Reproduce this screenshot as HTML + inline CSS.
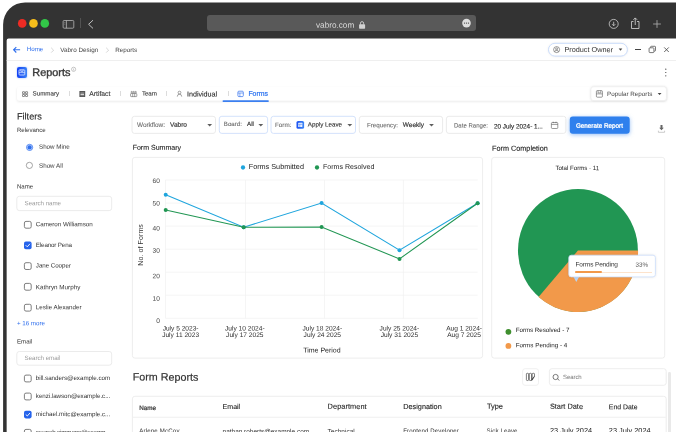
<!DOCTYPE html>
<html><head><meta charset="utf-8"><title>Reports</title>
<style>
*{box-sizing:border-box;margin:0;padding:0}
html,body{width:676px;height:432px;overflow:hidden;background:#fff}
body{position:relative;font-family:"Liberation Sans",sans-serif;}
.t{transform-origin:0 0;position:absolute;white-space:nowrap;line-height:1.117em;height:1.117em;display:block}
.a{position:absolute;display:block}
.box{position:absolute;border:1px solid #e6e6e6;border-radius:3px;background:#fff}
.cb{position:absolute;width:7.6px;height:7.6px;border:1px solid #555;border-radius:2px;background:#fff}
.cbc{position:absolute;width:7.6px;height:7.6px;border-radius:2px;background:#2563eb}
svg{position:absolute;overflow:visible}
#root{position:absolute;left:0;top:0;width:676px;height:432px;overflow:hidden;will-change:transform}
</style></head><body><div id="root">

<svg style="left:0;top:0" width="676" height="432"><path d="M3.1 440 V24.4 A22 22 0 0 1 25.1 2.4 H680 V440 Z" fill="#333"/><path d="M6.65 440 V40.5 A2 2 0 0 1 8.65 38.5 H680 V440 Z" fill="#fff"/><circle cx="22.2" cy="23.4" r="4.3" fill="#ee2b24"/><circle cx="33.5" cy="23.4" r="4.3" fill="#f6bd1b"/><circle cx="44.8" cy="23.4" r="4.3" fill="#32c748"/></svg>
<svg style="left:0;top:0" width="676" height="432"><g transform="translate(62,19)"><rect x="1.1" y="1.5" width="10.7" height="7.7" rx="1" fill="#3a3a3a" stroke="#bdbdbd" stroke-width="0.75"/><line x1="4.4" y1="1.5" x2="4.4" y2="9.2" stroke="#bdbdbd" stroke-width="0.75"/><path d="M2.1 3.6 H3.4 M2.1 5.2 H3.4" stroke="#999" stroke-width="0.5"/></g></svg>
<div class="a" style="left:80.2px;top:18.2px;width:0.6px;height:9.6px;background:#525252"></div>
<svg style="left:0;top:0" width="676" height="432"><g transform="translate(87.7,19.3)"><path d="M5.3 0.9 L0.9 5 L5.3 9.1" fill="none" stroke="#cfcfcf" stroke-width="0.9"/></g></svg>
<div class="a" style="left:207px;top:15px;width:269.4px;height:16px;border-radius:3px;background:#595959"></div>
<span class="t" style="left:316px;top:20px;font-size:8.2px;font-weight:400;color:#dcdcdc;letter-spacing:0.002px;transform:translate(0.00px,0.78px) rotate(0.05deg);">vabro.com</span>
<svg style="left:0;top:0" width="676" height="432"><g transform="translate(359,21)"><rect x="0.05" y="3.35" width="6.05" height="4.45" rx="0.7" fill="#d2d2d2"/><path d="M1.5 3.6 V2.2 a1.55 1.6 0 0 1 3.1 0 V3.6" fill="none" stroke="#d2d2d2" stroke-width="0.9"/></g></svg>
<svg style="left:0;top:0" width="676" height="432"><g transform="translate(462.2,18.8)"><circle cx="4.3" cy="4.3" r="4.3" fill="#dedede"/><circle cx="2.3" cy="4.3" r="0.65" fill="#444"/><circle cx="4.3" cy="4.3" r="0.65" fill="#444"/><circle cx="6.3" cy="4.3" r="0.65" fill="#444"/></g></svg>
<svg style="left:0;top:0" width="676" height="432"><g transform="translate(608.2,18.4)"><circle cx="5.5" cy="5.5" r="4.5" fill="none" stroke="#cfcfcf" stroke-width="0.8"/><path d="M5.5 3.3 V7.3 M3.9 5.8 L5.5 7.4 L7.1 5.8" fill="none" stroke="#cfcfcf" stroke-width="0.8"/></g></svg>
<svg style="left:0;top:0" width="676" height="432"><g transform="translate(630.3,17)"><path d="M3.2 4.5 H1.2 V11.5 H8.7 V4.5 H6.7" fill="none" stroke="#cfcfcf" stroke-width="0.85" stroke-linejoin="round"/><path d="M4.95 8 V1 M3.1 2.8 L4.95 0.9 L6.8 2.8" fill="none" stroke="#cfcfcf" stroke-width="0.85"/></g></svg>
<svg style="left:0;top:0" width="676" height="432"><g transform="translate(653,20)"><path d="M4 0.1 V7.9 M0.1 4 H7.9" stroke="#aaa" stroke-width="0.85"/></g></svg>
<svg style="left:0;top:0" width="676" height="432"><g transform="translate(12.9,46.6)"><path d="M7.2 3.2 H0.8 M3.4 0.5 L0.7 3.2 L3.4 5.9" fill="none" stroke="#2f6fed" stroke-width="1.1"/></g></svg>
<span class="t" style="left:26px;top:46px;font-size:6.24px;font-weight:400;color:#2f6fed;letter-spacing:-0.048px;transform:translate(0.80px,0.12px) rotate(0.05deg);">Home</span>
<svg style="left:0;top:0" width="676" height="432"><g transform="translate(50.5,47.2)"><path d="M0.7 0.6 L3.1 3 L0.7 5.4" fill="none" stroke="#c4c4c4" stroke-width="0.7"/></g></svg>
<span class="t" style="left:60px;top:46px;font-size:6.33px;font-weight:400;color:#444;letter-spacing:0.001px;transform:translate(0.30px,0.07px) rotate(0.05deg);">Vabro Design</span>
<svg style="left:0;top:0" width="676" height="432"><g transform="translate(105.5,47.2)"><path d="M0.7 0.6 L3.1 3 L0.7 5.4" fill="none" stroke="#c4c4c4" stroke-width="0.7"/></g></svg>
<span class="t" style="left:115px;top:46px;font-size:6.28px;font-weight:400;color:#444;letter-spacing:0.002px;transform:translate(0.20px,0.10px) rotate(0.05deg);">Reports</span>
<svg style="left:0;top:0" width="676" height="70"><rect x="6.6" y="60.0" width="680" height="0.8" fill="#ebebeb"/></svg>
<svg style="left:0;top:0" width="676" height="432"><rect x="548.5" y="43.3" width="78.90" height="12.80" rx="6.4" fill="#fff" stroke="#c4d8f9" stroke-width="0.9" style="filter:drop-shadow(0 0.6px 1px rgba(0,0,0,0.07))"/></svg>
<svg style="left:0;top:0" width="676" height="432"><g transform="translate(553.2,46.2)"><circle cx="3.4" cy="3.4" r="3" fill="none" stroke="#555" stroke-width="0.6"/><circle cx="3.4" cy="2.7" r="1" fill="none" stroke="#555" stroke-width="0.6"/><path d="M1.5 5.5 a2 2 0 0 1 3.8 0" fill="none" stroke="#555" stroke-width="0.6"/></g></svg>
<span class="t" style="left:564px;top:46px;font-size:7.29px;font-weight:400;color:#333;letter-spacing:-0.002px;transform:translate(0.40px,0.09px) rotate(0.05deg);">Product Owner</span>
<svg style="left:0;top:0" width="676" height="432"><g transform="translate(618.7,48.6)"><path d="M0 0 H3.6 L1.8 2.2 Z" fill="#444"/></g></svg>
<div class="a" style="left:635px;top:49.2px;width:6.2px;height:0.9px;background:#444"></div>
<svg style="left:0;top:0" width="676" height="432"><g transform="translate(648.6,45.8)"><rect x="0.5" y="2" width="4.8" height="4.8" rx="0.8" fill="#fff" stroke="#555" stroke-width="0.8"/><path d="M2 1.9 V1.2 a0.7 0.7 0 0 1 0.7 -0.7 H6.2 a0.7 0.7 0 0 1 0.7 0.7 V4.6 a0.7 0.7 0 0 1 -0.7 0.7 H5.4" fill="none" stroke="#555" stroke-width="0.8"/></g></svg>
<svg style="left:0;top:0" width="676" height="432"><g transform="translate(664,47.2)"><path d="M0.2 0.2 L4.8 4.8 M4.8 0.2 L0.2 4.8" stroke="#444" stroke-width="0.8"/></g></svg>
<div class="a" style="left:16.9px;top:67.1px;width:10.1px;height:10.6px;border-radius:2px;background:linear-gradient(90deg,#1240f5,#3b82f6);box-shadow:0 0 2px rgba(37,99,235,0.45)"></div>
<svg style="left:0;top:0" width="676" height="432"><g transform="translate(18.6,69.4)"><rect x="0.4" y="0.4" width="5.8" height="5.2" rx="0.8" fill="none" stroke="#dfe9ff" stroke-width="0.8"/><path d="M0.4 3.2 H6.2 M2.2 0.4 V2 H4.4 V0.4" fill="none" stroke="#dfe9ff" stroke-width="0.7"/></g></svg>
<span class="t" style="left:32px;top:65px;font-size:10.88px;font-weight:400;color:#3a3a3a;letter-spacing:0.001px;transform:translate(0.30px,0.95px) rotate(0.05deg);-webkit-text-stroke:0.4px #3a3a3a;">Reports</span>
<svg style="left:0;top:0" width="676" height="432"><g transform="translate(71.1,66.8)"><circle cx="2.5" cy="2.5" r="2.1" fill="none" stroke="#9a9a9a" stroke-width="0.55"/><path d="M2.5 2.3 V3.7 M2.5 1.3 V1.8" stroke="#9a9a9a" stroke-width="0.55"/></g></svg>
<svg style="left:0;top:0" width="676" height="100"><circle cx="665.8" cy="69.2" r="0.62" fill="#3a3a3a"/><circle cx="665.8" cy="72.5" r="0.62" fill="#3a3a3a"/><circle cx="665.8" cy="75.8" r="0.62" fill="#3a3a3a"/></svg>
<svg style="left:0;top:0" width="676" height="432"><rect x="17" y="87" width="649.60" height="13.80" rx="2" fill="#fff" stroke="none" stroke-width="0" style="filter:drop-shadow(0 1.1px 1.1px rgba(0,0,0,0.09))"/></svg>
<svg style="left:0;top:0" width="676" height="432"><g transform="translate(22.2,91.4)"><g fill="none" stroke="#444" stroke-width="0.6"><rect x="0.3" y="0.3" width="2.1" height="2" rx="0.3"/><rect x="3.3" y="0.3" width="2.1" height="2" rx="0.3"/><rect x="0.3" y="3.1" width="2.1" height="2" rx="0.3"/><rect x="3.3" y="3.1" width="2.1" height="2" rx="0.3"/></g></g></svg>
<span class="t" style="left:32px;top:90px;font-size:6.24px;font-weight:400;color:#3c3c3c;letter-spacing:-0.033px;transform:translate(0.60px,0.45px) rotate(0.05deg);-webkit-text-stroke:0.12px #3c3c3c;">Summary</span>
<div class="a" style="left:69.2px;top:91.4px;width:0.7px;height:4.6px;background:#dcdcdc"></div>
<div class="a" style="left:120.10000000000001px;top:91.4px;width:0.7px;height:4.6px;background:#dcdcdc"></div>
<div class="a" style="left:166.39999999999998px;top:91.4px;width:0.7px;height:4.6px;background:#dcdcdc"></div>
<div class="a" style="left:227.7px;top:91.4px;width:0.7px;height:4.6px;background:#dcdcdc"></div>
<svg style="left:0;top:0" width="676" height="432"><g transform="translate(79.4,91.2)"><rect x="0" y="-0.2" width="5.8" height="6.1" rx="0.4" fill="#555"/><rect x="1" y="0.7" width="3.8" height="4.3" fill="#7a7a7a"/><rect x="1.2" y="2.6" width="3.4" height="1.2" fill="#d4d4d4"/></g></svg>
<span class="t" style="left:89px;top:89px;font-size:6.81px;font-weight:400;color:#3c3c3c;letter-spacing:0.001px;transform:translate(0.20px,0.94px) rotate(0.05deg);-webkit-text-stroke:0.12px #3c3c3c;">Artifact</span>
<svg style="left:0;top:0" width="676" height="432"><g transform="translate(130.2,91)"><g fill="none" stroke="#555" stroke-width="0.55"><circle cx="1.5" cy="1.1" r="0.7"/><circle cx="3.5" cy="1.1" r="0.7"/><circle cx="5.5" cy="1.1" r="0.7"/><rect x="0.4" y="2.5" width="6.2" height="3.1" rx="0.5"/><path d="M2.5 2.5 V5.6 M4.5 2.5 V5.6"/></g></g></svg>
<span class="t" style="left:142px;top:90px;font-size:6.24px;font-weight:400;color:#3c3c3c;letter-spacing:-0.120px;transform:translate(0.00px,0.45px) rotate(0.05deg);-webkit-text-stroke:0.12px #3c3c3c;">Team</span>
<svg style="left:0;top:0" width="676" height="432"><g transform="translate(176.9,90.8)"><circle cx="2.6" cy="1.8" r="1.4" fill="none" stroke="#666" stroke-width="0.6"/><path d="M0.4 5.8 a2.2 2.4 0 0 1 4.4 0" fill="none" stroke="#666" stroke-width="0.6"/></g></svg>
<span class="t" style="left:187px;top:90px;font-size:7.2px;font-weight:400;color:#2a2a2a;letter-spacing:-0.025px;transform:translate(0.00px,0.48px) rotate(0.05deg);-webkit-text-stroke:0.1px #2a2a2a;">Individual</span>
<svg style="left:0;top:0" width="676" height="432"><g transform="translate(237.5,90.8)"><rect x="0.4" y="0.4" width="5.4" height="5.4" rx="1" fill="none" stroke="#2f6fed" stroke-width="0.7"/><path d="M0.4 2.2 H5.8 M2.4 2.2 V5.8" stroke="#2f6fed" stroke-width="0.6" fill="none"/></g></svg>
<span class="t" style="left:248px;top:89px;font-size:6.92px;font-weight:400;color:#3478f0;letter-spacing:-0.001px;transform:translate(0.40px,0.84px) rotate(0.05deg);-webkit-text-stroke:0.25px #3478f0;">Forms</span>
<svg style="left:0;top:0" width="676" height="120"><rect x="222.5" y="100.2" width="46.4" height="1.8" rx="0.9" fill="#3b7ff0"/></svg>
<svg style="left:0;top:0" width="676" height="432"><rect x="591" y="86.8" width="75.40" height="13.70" rx="2.5" fill="#fff" stroke="#ededed" stroke-width="0.6" style="filter:drop-shadow(0 0.5px 1.2px rgba(0,0,0,0.12))"/></svg>
<svg style="left:0;top:0" width="676" height="432"><g transform="translate(596,90.2)"><rect x="0.4" y="0.4" width="6" height="6.6" rx="0.9" fill="none" stroke="#555" stroke-width="0.6"/><path d="M2 0.4 V2.7 H4.8 V0.4 M0.4 3.7 H6.4" fill="none" stroke="#555" stroke-width="0.55"/></g></svg>
<span class="t" style="left:607px;top:90px;font-size:6.28px;font-weight:400;color:#444;letter-spacing:0.001px;transform:translate(0.00px,0.00px) rotate(0.05deg);">Popular Reports</span>
<svg style="left:0;top:0" width="676" height="432"><g transform="translate(657.7,93)"><path d="M0 0 H3.8 L1.9 2.1 Z" fill="#444"/></g></svg>
<span class="t" style="left:16px;top:111px;font-size:9.18px;font-weight:400;color:#2b2b2b;letter-spacing:0.002px;transform:translate(0.90px,0.59px) rotate(0.05deg);-webkit-text-stroke:0.14px #2b2b2b;">Filters</span>
<span class="t" style="left:16px;top:126px;font-size:6.1px;font-weight:400;color:#333;letter-spacing:-0.003px;transform:translate(0.90px,0.98px) rotate(0.05deg);">Relevance</span>
<svg style="left:0;top:0" width="676" height="432"><g transform="translate(25.6,143.4)"><circle cx="4" cy="4" r="3.1" fill="#dbe7ff" stroke="#2f6fed" stroke-width="0.75"/><circle cx="4" cy="4" r="2.15" fill="#2f6fed"/></g></svg>
<span class="t" style="left:39px;top:143px;font-size:6.24px;font-weight:400;color:#333;letter-spacing:-0.009px;transform:translate(0.00px,0.85px) rotate(0.05deg);">Show Mine</span>
<svg style="left:0;top:0" width="676" height="432"><g transform="translate(25.4,161.4)"><circle cx="4" cy="4" r="3.1" fill="#fff" stroke="#777" stroke-width="0.65"/></g></svg>
<span class="t" style="left:39px;top:161px;font-size:6.26px;font-weight:400;color:#333;letter-spacing:-0.001px;transform:translate(0.00px,0.83px) rotate(0.05deg);">Show All</span>
<span class="t" style="left:16px;top:183px;font-size:6.11px;font-weight:400;color:#333;letter-spacing:0.001px;transform:translate(0.90px,0.57px) rotate(0.05deg);">Name</span>
<svg style="left:0;top:0" width="676" height="432"><rect x="16.8" y="196.3" width="94.90" height="14.30" rx="2.5" fill="#fff" stroke="#e6e6e6" stroke-width="0.8" /></svg>
<span class="t" style="left:24px;top:200px;font-size:6.24px;font-weight:400;color:#9a9a9a;letter-spacing:-0.061px;transform:translate(0.60px,0.15px) rotate(0.05deg);">Search name</span>
<svg style="left:0;top:0" width="676" height="432"><g transform="translate(24.0,221.0)"><rect x="0.4" y="0.4" width="6.8" height="6.8" rx="1.6" fill="#fff" stroke="#606060" stroke-width="0.8"/></g></svg>
<span class="t" style="left:35px;top:221px;font-size:6.24px;font-weight:400;color:#333;letter-spacing:-0.036px;transform:translate(0.85px,0.30px) rotate(0.05deg);">Cameron Williamson</span>
<svg style="left:0;top:0" width="676" height="432"><g transform="translate(24.0,241.6)"><rect width="7.6" height="7.6" rx="1.8" fill="#2563eb"/><path d="M2 3.9 L3.3 5.2 L5.7 2.5" fill="none" stroke="#fff" stroke-width="0.9" stroke-linecap="round" stroke-linejoin="round"/></g></svg>
<span class="t" style="left:35px;top:241px;font-size:6.24px;font-weight:400;color:#333;letter-spacing:-0.151px;transform:translate(0.85px,0.90px) rotate(0.05deg);">Eleanor Pena</span>
<svg style="left:0;top:0" width="676" height="432"><g transform="translate(24.0,262.3)"><rect x="0.4" y="0.4" width="6.8" height="6.8" rx="1.6" fill="#fff" stroke="#606060" stroke-width="0.8"/></g></svg>
<span class="t" style="left:35px;top:262px;font-size:6.24px;font-weight:400;color:#333;letter-spacing:-0.068px;transform:translate(0.85px,0.60px) rotate(0.05deg);">Jane Cooper</span>
<svg style="left:0;top:0" width="676" height="432"><g transform="translate(24.0,283.0)"><rect x="0.4" y="0.4" width="6.8" height="6.8" rx="1.6" fill="#fff" stroke="#606060" stroke-width="0.8"/></g></svg>
<span class="t" style="left:35px;top:283px;font-size:6.3px;font-weight:400;color:#333;letter-spacing:-0.001px;transform:translate(0.85px,0.25px) rotate(0.05deg);">Kathryn Murphy</span>
<svg style="left:0;top:0" width="676" height="432"><g transform="translate(24.0,303.9)"><rect x="0.4" y="0.4" width="6.8" height="6.8" rx="1.6" fill="#fff" stroke="#606060" stroke-width="0.8"/></g></svg>
<span class="t" style="left:35px;top:304px;font-size:6.24px;font-weight:400;color:#333;letter-spacing:-0.003px;transform:translate(0.85px,0.20px) rotate(0.05deg);">Leslie Alexander</span>
<span class="t" style="left:16px;top:320px;font-size:6.24px;font-weight:400;color:#2f6fed;letter-spacing:-0.021px;transform:translate(0.90px,0.25px) rotate(0.05deg);">+ 16 more</span>
<span class="t" style="left:16px;top:338px;font-size:6.16px;font-weight:400;color:#333;letter-spacing:-0.001px;transform:translate(0.90px,0.43px) rotate(0.05deg);">Email</span>
<svg style="left:0;top:0" width="676" height="432"><rect x="16.8" y="351.5" width="94.90" height="13.70" rx="2.5" fill="#fff" stroke="#e6e6e6" stroke-width="0.8" /></svg>
<span class="t" style="left:24px;top:354px;font-size:6.24px;font-weight:400;color:#9a9a9a;letter-spacing:-0.065px;transform:translate(0.60px,0.95px) rotate(0.05deg);">Search email</span>
<svg style="left:0;top:0" width="676" height="432"><g transform="translate(24.0,374.7)"><rect x="0.4" y="0.4" width="6.8" height="6.8" rx="1.6" fill="#fff" stroke="#606060" stroke-width="0.8"/></g></svg>
<span class="t" style="left:35px;top:375px;font-size:6.24px;font-weight:400;color:#333;letter-spacing:-0.024px;transform:translate(0.85px,0.00px) rotate(0.05deg);">bill.sanders@example.com</span>
<svg style="left:0;top:0" width="676" height="432"><g transform="translate(24.0,392.7)"><rect x="0.4" y="0.4" width="6.8" height="6.8" rx="1.6" fill="#fff" stroke="#606060" stroke-width="0.8"/></g></svg>
<span class="t" style="left:35px;top:393px;font-size:6.24px;font-weight:400;color:#333;letter-spacing:-0.052px;transform:translate(0.85px,0.00px) rotate(0.05deg);">kenzi.lawson@example.c...</span>
<svg style="left:0;top:0" width="676" height="432"><g transform="translate(24.0,410.8)"><rect width="7.6" height="7.6" rx="1.8" fill="#2563eb"/><path d="M2 3.9 L3.3 5.2 L5.7 2.5" fill="none" stroke="#fff" stroke-width="0.9" stroke-linecap="round" stroke-linejoin="round"/></g></svg>
<span class="t" style="left:35px;top:411px;font-size:6.24px;font-weight:400;color:#333;letter-spacing:-0.008px;transform:translate(0.85px,0.10px) rotate(0.05deg);">michael.mitc@example.c...</span>
<svg style="left:0;top:0" width="676" height="432"><g transform="translate(24.0,429.0)"><rect x="0.4" y="0.4" width="6.8" height="6.8" rx="1.6" fill="#fff" stroke="#606060" stroke-width="0.8"/></g></svg>
<span class="t" style="left:35px;top:429px;font-size:6.24px;font-weight:400;color:#333;letter-spacing:-0.136px;transform:translate(0.85px,0.30px) rotate(0.05deg);">seunah.simmons@examp...</span>
<svg style="left:0;top:0" width="676" height="432"><rect x="132" y="116.3" width="83.50" height="17.10" rx="2.5" fill="#fff" stroke="#e8e8e8" stroke-width="0.9" /></svg>
<span class="t" style="left:137px;top:120px;font-size:6.41px;font-weight:400;color:#6a6a6a;letter-spacing:-0.002px;transform:translate(0.00px,0.92px) rotate(0.05deg);-webkit-text-stroke:0.08px #6a6a6a;">Workflow:</span>
<span class="t" style="left:170px;top:120px;font-size:6.55px;font-weight:400;color:#333;letter-spacing:0.002px;transform:translate(0.00px,0.84px) rotate(0.05deg);-webkit-text-stroke:0.18px #333;">Vabro</span>
<svg style="left:0;top:0" width="676" height="432"><g transform="translate(207.3,123.9)"><path d="M0 0 H4.8 L2.4 2.6 Z" fill="#5e5e5e"/></g></svg>
<svg style="left:0;top:0" width="676" height="432"><rect x="219.3" y="116.3" width="48.30" height="17.10" rx="2.5" fill="#fff" stroke="#cfdffb" stroke-width="0.9" /></svg>
<span class="t" style="left:223px;top:121px;font-size:6.14px;font-weight:400;color:#6a6a6a;letter-spacing:0.002px;transform:translate(0.80px,0.09px) rotate(0.05deg);-webkit-text-stroke:0.08px #6a6a6a;">Board:</span>
<span class="t" style="left:247px;top:121px;font-size:6.21px;font-weight:400;color:#333;letter-spacing:-0.001px;transform:translate(0.10px,0.04px) rotate(0.05deg);-webkit-text-stroke:0.18px #333;">All</span>
<svg style="left:0;top:0" width="676" height="432"><g transform="translate(258.4,123.9)"><path d="M0 0 H4.8 L2.4 2.6 Z" fill="#5e5e5e"/></g></svg>
<svg style="left:0;top:0" width="676" height="432"><rect x="271" y="116.3" width="84.50" height="17.10" rx="2.5" fill="#fff" stroke="#cfdffb" stroke-width="0.9" /></svg>
<span class="t" style="left:275px;top:121px;font-size:6.28px;font-weight:400;color:#6a6a6a;letter-spacing:0.001px;transform:translate(0.00px,0.00px) rotate(0.05deg);-webkit-text-stroke:0.08px #6a6a6a;">Form:</span>
<svg style="left:0;top:0" width="676" height="432"><g transform="translate(296.5,121)"><defs><linearGradient id="fg"><stop offset="0" stop-color="#1a4ff2"/><stop offset="1" stop-color="#3b86f6"/></linearGradient></defs><rect width="7.6" height="7.8" rx="1.6" fill="url(#fg)"/><rect x="1.7" y="1.7" width="4.2" height="4.2" rx="0.5" fill="#e9f0ff"/><path d="M1.7 3.3 H5.9 M3.3 3.3 V5.9" stroke="#2f6fed" stroke-width="0.5"/></g></svg>
<span class="t" style="left:307px;top:121px;font-size:6.21px;font-weight:400;color:#333;letter-spacing:0.002px;transform:translate(0.80px,0.54px) rotate(0.05deg);-webkit-text-stroke:0.12px #333;">Apply Leave</span>
<svg style="left:0;top:0" width="676" height="432"><g transform="translate(347.4,123.9)"><path d="M0 0 H4.8 L2.4 2.6 Z" fill="#5e5e5e"/></g></svg>
<svg style="left:0;top:0" width="676" height="432"><rect x="359.3" y="116.3" width="83.30" height="17.10" rx="2.5" fill="#fff" stroke="#e8e8e8" stroke-width="0.9" /></svg>
<span class="t" style="left:366px;top:122px;font-size:6.22px;font-weight:400;color:#6a6a6a;letter-spacing:-0.002px;transform:translate(0.90px,0.24px) rotate(0.05deg);-webkit-text-stroke:0.08px #6a6a6a;">Frequency:</span>
<span class="t" style="left:402px;top:120px;font-size:6.5px;font-weight:400;color:#333;letter-spacing:0.002px;transform:translate(0.80px,0.87px) rotate(0.05deg);-webkit-text-stroke:0.18px #333;">Weekly</span>
<svg style="left:0;top:0" width="676" height="432"><g transform="translate(429.1,123.9)"><path d="M0 0 H4.8 L2.4 2.6 Z" fill="#5e5e5e"/></g></svg>
<svg style="left:0;top:0" width="676" height="432"><rect x="446.4" y="116.3" width="119.50" height="17.10" rx="2.5" fill="#fff" stroke="#e8e8e8" stroke-width="0.9" /></svg>
<span class="t" style="left:454px;top:122px;font-size:6.06px;font-weight:400;color:#6a6a6a;letter-spacing:-0.003px;transform:translate(0.00px,0.43px) rotate(0.05deg);-webkit-text-stroke:0.08px #6a6a6a;">Date Range:</span>
<span class="t" style="left:494px;top:122px;font-size:6.39px;font-weight:400;color:#222;letter-spacing:-0.001px;transform:translate(0.00px,0.43px) rotate(0.05deg);-webkit-text-stroke:0.12px #222;">20 July 2024- 1...</span>
<svg style="left:0;top:0" width="676" height="432"><g transform="translate(551,121.5)"><rect x="0.4" y="1" width="6.4" height="6" rx="0.9" fill="none" stroke="#555" stroke-width="0.6"/><path d="M0.4 2.9 H6.8 M2.2 0.2 V1.6 M5 0.2 V1.6" stroke="#555" stroke-width="0.6" fill="none"/></g></svg>
<svg style="left:0;top:0" width="676" height="432"><rect x="569.8" y="116.4" width="59.90" height="17.30" rx="3" fill="#2f80ed" stroke="none" stroke-width="0" style="filter:drop-shadow(0 1px 2px rgba(47,128,237,0.5))"/></svg>
<span class="t" style="left:575px;top:121px;font-size:6.32px;font-weight:400;color:#fff;letter-spacing:0.002px;transform:translate(0.90px,0.68px) rotate(0.05deg);-webkit-text-stroke:0.3px #fff;">Generate Report</span>
<svg style="left:0;top:0" width="676" height="432"><g transform="translate(658,124.6)"><path d="M2.5 0.5 H4.5 V3.1 H5.8 L3.5 5.6 L1.2 3.1 H2.5 Z" fill="#666"/><path d="M0.4 6.1 V7.7 H6.6 V6.1" fill="none" stroke="#aaa" stroke-width="0.6"/></g></svg>
<span class="t" style="left:132px;top:143px;font-size:7.03px;font-weight:400;color:#222;letter-spacing:0.002px;transform:translate(0.65px,0.84px) rotate(0.05deg);-webkit-text-stroke:0.12px #222;">Form Summary</span>
<span class="t" style="left:492px;top:144px;font-size:7.26px;font-weight:400;color:#222;letter-spacing:0.002px;transform:translate(0.10px,0.73px) rotate(0.05deg);-webkit-text-stroke:0.12px #222;">Form Completion</span>
<svg style="left:0;top:0" width="676" height="432"><rect x="132.4" y="157.4" width="350.20" height="200.70" rx="2.5" fill="#fff" stroke="#e9e9e9" stroke-width="0.8" /></svg>
<svg style="left:0;top:0" width="676" height="432" viewBox="0 0 676 432"><line x1="165.4" y1="318.3" x2="477.7" y2="318.3" stroke="#f1f1f1" stroke-width="0.7"/><line x1="165.4" y1="295.2" x2="477.7" y2="295.2" stroke="#f1f1f1" stroke-width="0.7"/><line x1="165.4" y1="272.2" x2="477.7" y2="272.2" stroke="#f1f1f1" stroke-width="0.7"/><line x1="165.4" y1="249.2" x2="477.7" y2="249.2" stroke="#f1f1f1" stroke-width="0.7"/><line x1="165.4" y1="226.1" x2="477.7" y2="226.1" stroke="#f1f1f1" stroke-width="0.7"/><line x1="165.4" y1="203.1" x2="477.7" y2="203.1" stroke="#f1f1f1" stroke-width="0.7"/><line x1="165.4" y1="180.0" x2="477.7" y2="180.0" stroke="#f1f1f1" stroke-width="0.7"/><line x1="165.5" y1="180.0" x2="165.5" y2="318.3" stroke="#f1f1f1" stroke-width="0.7"/><line x1="245.5" y1="180.0" x2="245.5" y2="318.3" stroke="#f1f1f1" stroke-width="0.7"/><line x1="324.5" y1="180.0" x2="324.5" y2="318.3" stroke="#f1f1f1" stroke-width="0.7"/><line x1="403.4" y1="180.0" x2="403.4" y2="318.3" stroke="#f1f1f1" stroke-width="0.7"/><polyline points="165.7,194.80 243.7,227.20 321.6,203.00 399.5,250.20 477.6,203.20" fill="none" stroke="#1fa5dd" stroke-width="1.05"/><circle cx="165.7" cy="194.80" r="2" fill="#1fa5dd"/><circle cx="243.7" cy="227.20" r="2" fill="#1fa5dd"/><circle cx="321.6" cy="203.00" r="2" fill="#1fa5dd"/><circle cx="399.5" cy="250.20" r="2" fill="#1fa5dd"/><circle cx="477.6" cy="203.20" r="2" fill="#1fa5dd"/><polyline points="165.7,209.90 243.7,227.20 321.6,227.05 399.5,258.90 477.6,203.20" fill="none" stroke="#219653" stroke-width="1.05"/><circle cx="165.7" cy="209.90" r="2" fill="#219653"/><circle cx="243.7" cy="227.20" r="2" fill="#219653"/><circle cx="321.6" cy="227.05" r="2" fill="#219653"/><circle cx="399.5" cy="258.90" r="2" fill="#219653"/><circle cx="477.6" cy="203.20" r="2" fill="#219653"/><circle cx="243" cy="167.5" r="2.15" fill="#1fa5dd"/><circle cx="317" cy="167.5" r="2.15" fill="#219653"/></svg>
<span class="t" style="left:248px;top:162px;font-size:7.26px;font-weight:400;color:#222;letter-spacing:0.002px;transform:translate(0.70px,0.91px) rotate(0.05deg);">Forms Submitted</span>
<span class="t" style="left:323px;top:163px;font-size:7.06px;font-weight:400;color:#222;letter-spacing:0.000px;transform:translate(0.00px,0.03px) rotate(0.05deg);">Forms Resolved</span>
<span class="t" style="left:152px;top:176px;font-size:6.56px;font-weight:400;color:#444;letter-spacing:0.003px;transform:translate(0.60px,0.96px) rotate(0.05deg);">60</span>
<span class="t" style="left:152px;top:199px;font-size:6.56px;font-weight:400;color:#444;letter-spacing:0.003px;transform:translate(0.60px,0.56px) rotate(0.05deg);">50</span>
<span class="t" style="left:152px;top:224px;font-size:6.56px;font-weight:400;color:#444;letter-spacing:0.003px;transform:translate(0.60px,0.56px) rotate(0.05deg);">40</span>
<span class="t" style="left:152px;top:246px;font-size:6.56px;font-weight:400;color:#444;letter-spacing:0.003px;transform:translate(0.60px,0.86px) rotate(0.05deg);">30</span>
<span class="t" style="left:152px;top:272px;font-size:6.56px;font-weight:400;color:#444;letter-spacing:0.003px;transform:translate(0.60px,0.36px) rotate(0.05deg);">20</span>
<span class="t" style="left:152px;top:294px;font-size:6.56px;font-weight:400;color:#444;letter-spacing:0.003px;transform:translate(0.60px,0.76px) rotate(0.05deg);">10</span>
<span class="t" style="left:156px;top:317px;font-size:6.65px;font-weight:400;color:#444;letter-spacing:0.002px;transform:translate(0.20px,0.08px) rotate(0.05deg);">0</span>
<span class="t" style="left:91.3px;top:240.9px;width:100px;text-align:center;font-size:7px;color:#333;transform-origin:50% 50%;transform:rotate(-90deg);letter-spacing:0.1px">No. of Forms</span>
<span class="t" style="left:-20px;width:400px;text-align:center;top:324px;font-size:6.6px;font-weight:400;color:#2e2e2e;transform:translate(0.60px,0.40px) rotate(0.05deg);">July 5 2023-</span>
<span class="t" style="left:-20px;width:400px;text-align:center;top:330px;font-size:6.6px;font-weight:400;color:#2e2e2e;transform:translate(0.60px,0.90px) rotate(0.05deg);">July 11 2023</span>
<span class="t" style="left:44px;width:400px;text-align:center;top:324px;font-size:6.6px;font-weight:400;color:#2e2e2e;transform:translate(0.80px,0.40px) rotate(0.05deg);">July 10 2024-</span>
<span class="t" style="left:44px;width:400px;text-align:center;top:330px;font-size:6.6px;font-weight:400;color:#2e2e2e;transform:translate(0.80px,0.90px) rotate(0.05deg);">July 17 2025</span>
<span class="t" style="left:122px;width:400px;text-align:center;top:324px;font-size:6.6px;font-weight:400;color:#2e2e2e;transform:translate(0.30px,0.40px) rotate(0.05deg);">July 18 2024-</span>
<span class="t" style="left:122px;width:400px;text-align:center;top:330px;font-size:6.6px;font-weight:400;color:#2e2e2e;transform:translate(0.30px,0.90px) rotate(0.05deg);">July 24 2025</span>
<span class="t" style="left:199px;width:400px;text-align:center;top:324px;font-size:6.6px;font-weight:400;color:#2e2e2e;transform:translate(0.40px,0.40px) rotate(0.05deg);">July 25 2024-</span>
<span class="t" style="left:199px;width:400px;text-align:center;top:330px;font-size:6.6px;font-weight:400;color:#2e2e2e;transform:translate(0.40px,0.90px) rotate(0.05deg);">July 31 2025</span>
<span class="t" style="left:264px;width:400px;text-align:center;top:324px;font-size:6.6px;font-weight:400;color:#2e2e2e;transform:translate(0.10px,0.40px) rotate(0.05deg);">Aug 1 2024-</span>
<span class="t" style="left:264px;width:400px;text-align:center;top:330px;font-size:6.6px;font-weight:400;color:#2e2e2e;transform:translate(0.10px,0.90px) rotate(0.05deg);">Aug 7 2025</span>
<span class="t" style="left:121px;width:400px;text-align:center;top:346px;font-size:7px;font-weight:400;color:#222;transform:translate(0.90px,0.27px) rotate(0.05deg);">Time Period</span>
<svg style="left:0;top:0" width="676" height="432"><rect x="491.7" y="157.4" width="173.00" height="200.70" rx="2.5" fill="#fff" stroke="#e9e9e9" stroke-width="0.8" /></svg>
<span class="t" style="left:555px;top:165px;font-size:6.14px;font-weight:400;color:#222;letter-spacing:-0.000px;transform:translate(0.40px,0.09px) rotate(0.05deg);">Total Forms - 11</span>
<svg style="left:0;top:0" width="676" height="432" viewBox="0 0 676 432"><ellipse cx="577.95" cy="250.45" rx="59.95" ry="61.4" fill="#219653"/><path d="M577.95 250.45 L638.1000000000001 250.45 A60.150000000000006 61.6 0 0 1 538.57 297.01 Z" fill="#f2994a"/><circle cx="508.4" cy="331.8" r="2.9" fill="#3f8f2f"/><circle cx="508.4" cy="345.9" r="2.9" fill="#f2994a"/><path d="M573.3 276.6 H579.3 L576.3 281.9 Z" fill="#b8d4f5"/></svg>
<svg style="left:0;top:0" width="676" height="432"><rect x="568.8" y="255.2" width="86.60" height="21.70" rx="2.5" fill="#fff" stroke="#cbddfb" stroke-width="0.8" style="filter:drop-shadow(0 0.5px 1px rgba(0,0,0,0.10))"/></svg>
<span class="t" style="left:575px;top:260px;font-size:6.53px;font-weight:400;color:#333;letter-spacing:-0.140px;transform:translate(0.50px,0.55px) rotate(0.05deg);">Forms Pending</span>
<span class="t" style="left:635px;top:260px;font-size:6.25px;font-weight:400;color:#555;letter-spacing:-0.005px;transform:translate(0.50px,0.72px) rotate(0.05deg);">33%</span>
<div class="a" style="left:574.6px;top:271.7px;width:77.3px;height:0.7px;background:#fde3cc"></div>
<div class="a" style="left:574.6px;top:271.4px;width:27.2px;height:1.3px;background:#f2994a;border-radius:1px"></div>
<span class="t" style="left:515px;top:327px;font-size:6.24px;font-weight:400;color:#222;letter-spacing:-0.038px;transform:translate(0.70px,0.02px) rotate(0.05deg);">Forms Resolved - 7</span>
<span class="t" style="left:515px;top:341px;font-size:6.27px;font-weight:400;color:#222;letter-spacing:0.002px;transform:translate(0.70px,0.31px) rotate(0.05deg);">Forms Pending - 4</span>
<span class="t" style="left:132px;top:371px;font-size:10.72px;font-weight:400;color:#333;letter-spacing:-0.002px;transform:translate(0.80px,0.60px) rotate(0.05deg);-webkit-text-stroke:0.2px #333;">Form Reports</span>
<svg style="left:0;top:0" width="676" height="432"><rect x="522.6" y="368.7" width="15.90" height="16.60" rx="2.5" fill="#fff" stroke="#ececec" stroke-width="0.8" /></svg>
<svg style="left:0;top:0" width="676" height="432"><g transform="translate(526,372.8)"><g fill="none" stroke="#3a3a3a" stroke-width="0.65"><rect x="0.4" y="0.5" width="2.2" height="7.2" rx="0.8"/><rect x="3.3" y="0.5" width="2.2" height="7.2" rx="0.8"/><path d="M6.2 1.3 a0.8 0.8 0 0 1 0.8 -0.8 h0.7 a0.8 0.8 0 0 1 0.8 0.8 V3.4 L6.2 7.4 Z"/></g><path d="M8.7 3.6 L5.3 7.9 L4.7 8 L6 6.3 L8.2 3.4 Z" fill="#2a2a2a"/></g></svg>
<svg style="left:0;top:0" width="676" height="432"><rect x="549.4" y="368.7" width="116.80" height="16.60" rx="2.5" fill="#fff" stroke="#e9e9e9" stroke-width="0.8" /></svg>
<svg style="left:0;top:0" width="676" height="432"><g transform="translate(552.4,373.8)"><circle cx="3.2" cy="3.2" r="2.6" fill="none" stroke="#444" stroke-width="0.7"/><path d="M5.1 5.1 L7 6.6" stroke="#444" stroke-width="0.7"/></g></svg>
<span class="t" style="left:563px;top:374px;font-size:6.05px;font-weight:400;color:#777;letter-spacing:-0.094px;transform:translate(0.00px,0.02px) rotate(0.05deg);">Search</span>
<div class="a" style="left:668.3px;top:372px;width:2.8px;height:80px;background:#e9e9e9;border-radius:1.4px"></div>
<svg style="left:0;top:0" width="676" height="432"><rect x="132.4" y="396.3" width="533.80" height="63.70" rx="2.5" fill="#fff" stroke="#e9e9e9" stroke-width="0.8" /></svg>
<svg style="left:0;top:0" width="676" height="432"><rect x="132.8" y="416.8" width="533" height="0.8" fill="#ececec"/></svg>
<span class="t" style="left:139px;top:403px;font-size:6.3px;font-weight:400;color:#333;letter-spacing:-0.002px;transform:translate(0.20px,0.90px) rotate(0.05deg);-webkit-text-stroke:0.22px #333;">Name</span>
<span class="t" style="left:222px;top:403px;font-size:7.04px;font-weight:400;color:#222;letter-spacing:-0.001px;transform:translate(0.60px,0.04px) rotate(0.05deg);-webkit-text-stroke:0.1px #222;">Email</span>
<span class="t" style="left:327px;top:402px;font-size:7.35px;font-weight:400;color:#222;letter-spacing:0.078px;transform:translate(0.60px,0.85px) rotate(0.05deg);-webkit-text-stroke:0.1px #222;">Department</span>
<span class="t" style="left:403px;top:402px;font-size:7.27px;font-weight:400;color:#222;letter-spacing:0.001px;transform:translate(0.30px,0.90px) rotate(0.05deg);-webkit-text-stroke:0.1px #222;">Designation</span>
<span class="t" style="left:486px;top:402px;font-size:7.43px;font-weight:400;color:#222;letter-spacing:-0.003px;transform:translate(0.90px,0.80px) rotate(0.05deg);-webkit-text-stroke:0.1px #222;">Type</span>
<span class="t" style="left:549px;top:402px;font-size:7.35px;font-weight:400;color:#222;letter-spacing:0.001px;transform:translate(0.90px,0.85px) rotate(0.05deg);-webkit-text-stroke:0.1px #222;">Start Date</span>
<span class="t" style="left:608px;top:403px;font-size:6.88px;font-weight:400;color:#222;letter-spacing:0.002px;transform:translate(0.80px,0.14px) rotate(0.05deg);-webkit-text-stroke:0.1px #222;">End Date</span>
<span class="t" style="left:139px;top:427px;font-size:6.09px;font-weight:400;color:#333;letter-spacing:0.187px;transform:translate(0.20px,0.72px) rotate(0.05deg);">Arlene McCoy</span>
<span class="t" style="left:222px;top:427px;font-size:6.46px;font-weight:400;color:#333;letter-spacing:-0.001px;transform:translate(0.60px,0.49px) rotate(0.05deg);">nathan.roberts@example.com</span>
<span class="t" style="left:327px;top:427px;font-size:6.5px;font-weight:400;color:#333;letter-spacing:0.000px;transform:translate(0.60px,0.47px) rotate(0.05deg);">Technical</span>
<span class="t" style="left:403px;top:427px;font-size:6.09px;font-weight:400;color:#333;letter-spacing:0.110px;transform:translate(0.30px,0.72px) rotate(0.05deg);">Frontend Developer</span>
<span class="t" style="left:486px;top:427px;font-size:6.09px;font-weight:400;color:#333;letter-spacing:0.123px;transform:translate(0.60px,0.72px) rotate(0.05deg);">Sick Leave</span>
<span class="t" style="left:549px;top:426px;font-size:7.35px;font-weight:400;color:#222;letter-spacing:0.056px;transform:translate(0.90px,0.95px) rotate(0.05deg);">23 July 2024</span>
<span class="t" style="left:608px;top:426px;font-size:7.35px;font-weight:400;color:#222;letter-spacing:0.020px;transform:translate(0.80px,0.95px) rotate(0.05deg);">23 July 2024</span>
</div></body></html>
